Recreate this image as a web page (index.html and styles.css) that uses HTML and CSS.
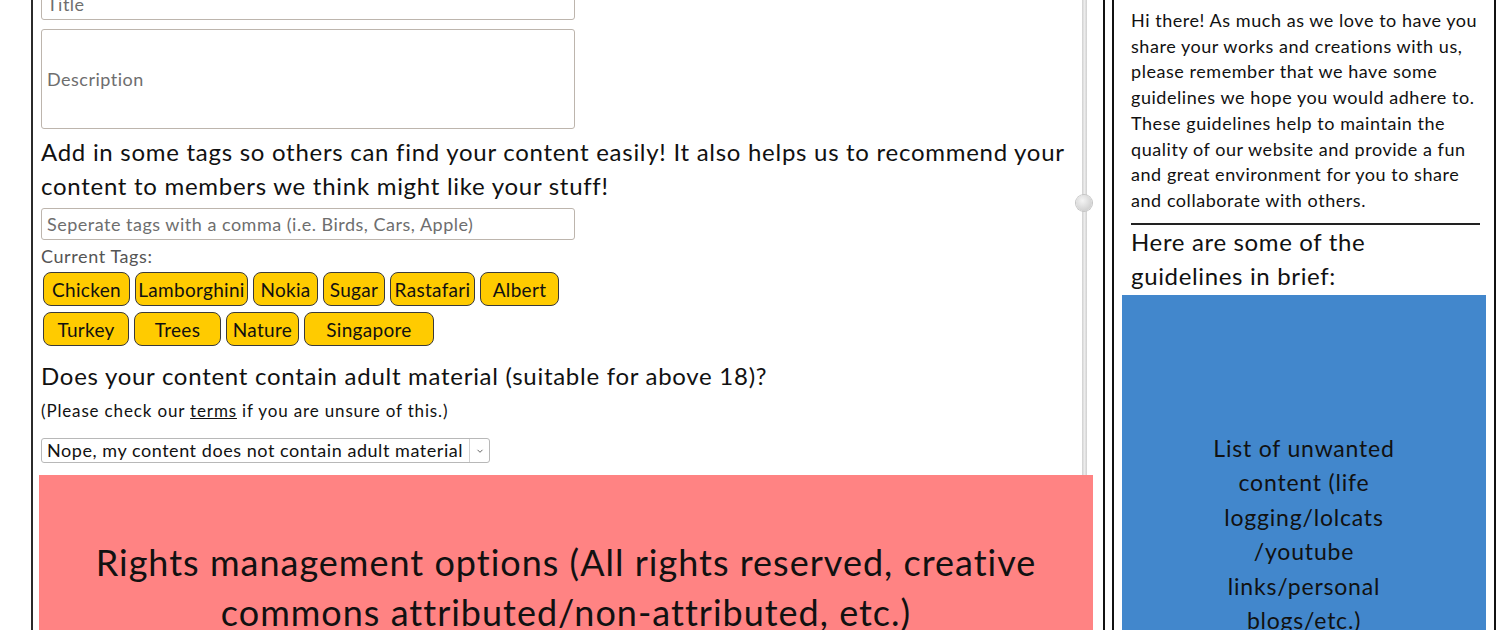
FILE: index.html
```html
<!DOCTYPE html>
<html lang="en">
<head>
<meta charset="utf-8">
<title>Upload</title>
<link rel="stylesheet" href="styles.css">
</head>
<body>
<div class="page">
  <main class="main">
    <div class="field field--title"><span class="ph">Title</span></div>
    <div class="field field--desc"><span class="ph">Description</span></div>
    <p class="heading">Add in some tags so others can find your content easily! It also helps us to recommend your<br>content to members we think might like your stuff!</p>
    <div class="field field--tags"><span class="ph">Seperate tags with a comma (i.e. Birds, Cars, Apple)</span></div>
    <p class="label">Current Tags:</p>
    <div class="tags">
      <span class="tag w87">Chicken</span>
      <span class="tag w113">Lamborghini</span>
      <span class="tag w65">Nokia</span>
      <span class="tag w62">Sugar</span>
      <span class="tag w85">Rastafari</span>
      <span class="tag w79">Albert</span>
      <span class="tag w86">Turkey</span>
      <span class="tag w87">Trees</span>
      <span class="tag w73">Nature</span>
      <span class="tag w130">Singapore</span>
    </div>
    <p class="heading heading--adult">Does your content contain adult material (suitable for above 18)?</p>
    <p class="note">(Please check our <a class="link" href="#">terms</a> if you are unsure of this.)</p>
    <div class="select">
      <span class="select__text">Nope, my content does not contain adult material</span>
      <span class="select__arrow"><svg width="8" height="6" viewBox="0 0 8 6"><path d="M1.5 1.8 L4 4.3 L6.5 1.8" fill="none" stroke="#666" stroke-width="1"/></svg></span>
    </div>
    <div class="rights">Rights management options (All rights reserved, creative<br>commons attributed/non-attributed, etc.)</div>
    <div class="slider"><span class="slider__knob"></span></div>
  </main>
  <aside class="side">
    <div class="side__inner">
      <p class="intro">Hi there! As much as we love to have you<br>share your works and creations with us,<br>please remember that we have some<br>guidelines we hope you would adhere to.<br>These guidelines help to maintain the<br>quality of our website and provide a fun<br>and great environment for you to share<br>and collaborate with others.</p>
      <hr class="rule">
      <p class="side__heading">Here are some of the<br>guidelines in brief:</p>
      <div class="unwanted">List of unwanted<br>content (life<br>logging/lolcats<br>/youtube<br>links/personal<br>blogs/etc.)</div>
    </div>
  </aside>
</div>
</body>
</html>
```

FILE: styles.css
```css
html, body {
  margin: 0;
  padding: 0;
  background: #fff;
  overflow: hidden;
  height: 630px;
}
body {
  font-family: Lato, "Noto Sans", sans-serif;
  color: #111;
}
p { margin: 0; }

.page {
  display: flex;
  align-items: flex-start;
  width: 1600px;
}

.main {
  position: relative;
  margin-left: 31px;
  margin-top: -13px;
  border-left: 2px solid #2b2b2b;
  padding-left: 6px;
  width: 1054px;
  min-height: 700px;
  display: flex;
  flex-direction: column;
  align-items: flex-start;
}
.main > * { flex-shrink: 0; }

.field {
  box-sizing: border-box;
  width: 534px;
  margin-left: 2px;
  border: 1px solid #bdb5ad;
  border-radius: 3px;
  background: #fff;
  display: flex;
  align-items: center;
  padding-left: 5px;
}
.field--title { height: 33px; }
.field--desc { height: 100px; margin-top: 9px; }
.field--tags { height: 32px; margin-top: 5px; }
.ph {
  font-size: 18px;
  color: #6e6e6e;
  letter-spacing: 0.5px;
  white-space: nowrap;
}

.heading {
  font-size: 24px;
  line-height: 34px;
  letter-spacing: 0.72px;
  margin-top: 6px;
  margin-left: 2px;
  white-space: nowrap;
}
.heading--adult { margin-top: 13px; }

.label {
  font-size: 18px;
  line-height: 24px;
  letter-spacing: 0.6px;
  color: #555;
  margin-top: 4px;
  margin-left: 2px;
}

.tags {
  width: 534px;
  margin-left: 2px;
  margin-top: 4px;
  padding-left: 2px;
  box-sizing: border-box;
  display: flex;
  flex-wrap: wrap;
  column-gap: 5px;
  row-gap: 6px;
}
.tag {
  box-sizing: border-box;
  height: 34px;
  background: #ffcb00;
  border: 1px solid #3a3a3a;
  border-radius: 8px;
  font-size: 19px;
  letter-spacing: 0.3px;
  display: flex;
  align-items: center;
  justify-content: center;
  color: #111;
}
.w62 { width: 62px; }
.w65 { width: 65px; }
.w73 { width: 73px; }
.w79 { width: 79px; }
.w85 { width: 85px; }
.w86 { width: 86px; }
.w87 { width: 87px; }
.w113 { width: 113px; }
.w130 { width: 130px; }

.note {
  font-size: 17px;
  line-height: 24px;
  letter-spacing: 0.85px;
  margin-top: 6px;
  margin-left: 2px;
}
.link { color: #111; }

.select {
  box-sizing: border-box;
  height: 25px;
  width: 449px;
  margin-left: 2px;
  margin-top: 15px;
  border: 1px solid #b8b8b8;
  border-radius: 3px;
  display: flex;
  align-items: stretch;
  background: #fff;
}
.select__text {
  flex: 1;
  font-size: 18px;
  line-height: 23px;
  letter-spacing: 0.55px;
  padding-left: 5px;
  white-space: nowrap;
}
.select__arrow {
  width: 19px;
  border-left: 1px solid #d0d0d0;
  display: flex;
  align-items: center;
  justify-content: center;
}

.rights {
  position: relative;
  z-index: 1;
  align-self: stretch;
  margin-top: 12px;
  background: #ff8383;
  padding-top: 62px;
  height: 300px;
  text-align: center;
  font-size: 36px;
  line-height: 50px;
  letter-spacing: 1px;
  color: #111;
}

.slider {
  position: absolute;
  top: 0;
  bottom: 0;
  right: 6px;
  width: 5px;
  background: linear-gradient(to right, #cfcfcf, #ececec 50%, #cfcfcf);
}
.slider__knob {
  position: absolute;
  left: -6px;
  top: 208px;
  width: 16px;
  height: 16px;
  border-radius: 50%;
  background: radial-gradient(circle at 40% 35%, #f4f4f4, #d2d2d2 70%);
  box-shadow: 0 0 0 1px #c4c4c4;
}

.side {
  margin-left: 10px;
  margin-top: -11px;
  border: 2px solid #111;
  padding: 7px;
  width: 384px;
}
.side__inner {
  box-sizing: border-box;
  width: 384px;
  border: 2px solid #111;
  padding: 8px;
  height: 700px;
}
.intro {
  margin: 0 6px 0 9px;
  font-size: 18px;
  line-height: 25.7px;
  letter-spacing: 0.55px;
  white-space: nowrap;
}
.rule {
  margin: 9px 6px 0 9px;
  border: 0;
  border-top: 2px solid #222;
  height: 0;
}
.side__heading {
  margin: 0 6px 0 9px;
  font-size: 24px;
  line-height: 34px;
  letter-spacing: 0.65px;
  white-space: nowrap;
}
.unwanted {
  margin-top: 2px;
  background: #4287cc;
  text-align: center;
  font-size: 23px;
  line-height: 34.5px;
  letter-spacing: 0.8px;
  padding-top: 136px;
  height: 400px;
  color: #111;
}
```
